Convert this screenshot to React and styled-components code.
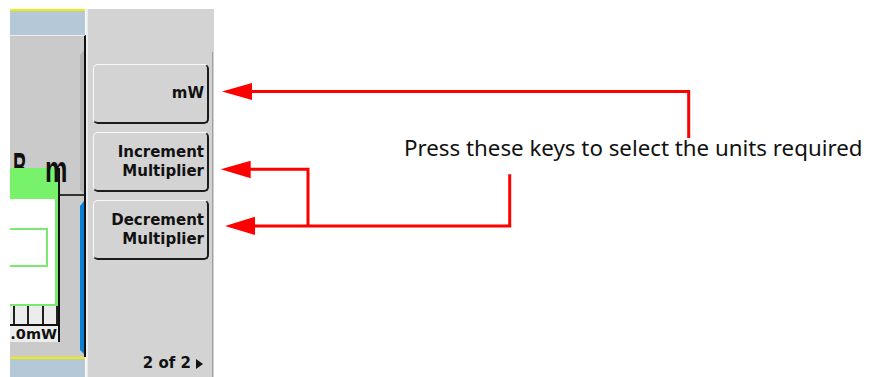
import React from 'react';
import styled, { createGlobalStyle } from 'styled-components';

const GlobalStyle = createGlobalStyle`
  html, body {
    margin: 0;
    padding: 0;
    background: #ffffff;
  }
  body {
    width: 870px;
    height: 377px;
    overflow: hidden;
  }
`;

const Page = styled.div`
  display: flex;
  height: 377px;
  padding-left: 10px;
  box-sizing: border-box;
`;

const Screen = styled.div`
  display: flex;
  margin-top: 9px;
  height: 368px;
`;

/* left part: the measurement display, cut off by the screenshot */
const Display = styled.div`
  display: flex;
  flex-direction: column;
  width: 76px;
`;

const StatusBar = styled.div`
  flex-shrink: 0;
  height: ${({ $h }) => $h}px;
  border-top: 2px solid #eeee00;
  background: #b5c8d8;
  margin-right: 1px;
`;

const Body = styled.div`
  display: flex;
  flex-shrink: 0;
  height: 321px;
  background: #cacaca;
  border-top: 1px solid #ececec;
  border-right: 2px solid #111111;
`;

const LeftCol = styled.div`
  display: flex;
  flex-direction: column;
  width: 50px;
`;

const Reading = styled.div`
  display: flex;
  align-items: flex-end;
  height: 132px;
  padding-left: 3px;
  box-sizing: border-box;
`;

const ReadingLine = styled.div`
  display: flex;
  align-items: baseline;
  margin-bottom: -21px;
  font-family: "Liberation Sans", Arial, sans-serif;
  font-weight: bold;
  color: #101010;
  line-height: 1;
`;

const Glyph = styled.span`
  display: inline-block;
  font-size: ${({ $size }) => $size}px;
  width: ${({ $w }) => $w}px;
  margin-right: ${({ $gap }) => $gap || 0}px;
  transform: scaleX(${({ $sx }) => $sx});
  transform-origin: left center;
  position: relative;
  z-index: ${({ $top }) => ($top ? 2 : 0)};
`;

const Window = styled.div`
  position: relative;
  z-index: 1;
  display: flex;
  flex-direction: column;
  border-right: 2px solid #111111;
`;

const WinHeader = styled.div`
  height: 31px;
  background: #78f26a;
`;

const WinBody = styled.div`
  height: 107px;
  background: #ffffff;
  border-right: 3px solid #7be96f;
  border-bottom: 2px solid #7be96f;
  padding-top: 29px;
  box-sizing: border-box;
`;

const Field = styled.div`
  width: 38px;
  height: 39px;
  box-sizing: border-box;
  border: 2px solid #7be96f;
  border-left: none;
`;

const Scale = styled.div`
  display: flex;
  justify-content: space-between;
  height: 18px;
  padding: 0 0 0 3px;
  background: #ececec;
  border-bottom: 2px solid #111111;
`;

const Tick = styled.div`
  width: 2px;
  background: #202020;
`;

const ScaleLabel = styled.div`
  height: 16px;
  padding-right: 1px;
  text-align: right;
  white-space: nowrap;
  font-family: "DejaVu Sans", sans-serif;
  font-weight: bold;
  font-size: 14.5px;
  line-height: 16px;
  color: #111111;
  background: #ececec;
`;

const SideCol = styled.div`
  display: flex;
  flex-direction: column;
  width: 24px;
`;

const SideUpper = styled.div`
  display: flex;
  justify-content: flex-end;
  height: 158px;
  padding-top: 14px;
  box-sizing: border-box;
`;

const Bevel = styled.div`
  width: 4px;
  background: ${({ $color }) => $color};
  clip-path: polygon(100% 0, 0 5px, 0 calc(100% - 4px), 100% 100%);
`;

const Rule = styled.div`
  height: 2px;
  background: #333333;
`;

const SideLower = styled.div`
  display: flex;
  justify-content: flex-end;
  height: 158px;
  padding-top: 5px;
  box-sizing: border-box;
`;

/* right part: the softkey panel */
const Panel = styled.div`
  display: flex;
  flex-direction: column;
  width: 128px;
  height: 368px;
  box-sizing: border-box;
  background: #d3d3d3;
  border-left: 2px solid #ededed;
`;

const KeyColumn = styled.div`
  display: flex;
  flex-direction: column;
  gap: 8px;
  flex: 1;
  margin: 43px 1px 0 0;
  padding: 12px 3px 0 5px;
  border-right: 1px solid #a0a0a0;
`;

const Key = styled.div`
  display: flex;
  flex-direction: column;
  justify-content: center;
  align-items: flex-end;
  height: 60px;
  box-sizing: border-box;
  padding-right: 3px;
  border-style: solid;
  border-width: 1px 2px 2px 1px;
  border-color: #f8f8f8 #1c1c1c #1c1c1c #f8f8f8;
  border-radius: 5px;
  font-family: "DejaVu Sans", sans-serif;
  font-weight: bold;
  font-size: 15px;
  line-height: 19px;
  color: #111111;
`;

const PageIndicator = styled.div`
  display: flex;
  align-items: center;
  justify-content: flex-end;
  gap: 5px;
  margin-top: auto;
  padding: 0 6px 4px 0;
  font-family: "DejaVu Sans", sans-serif;
  font-weight: bold;
  font-size: 15px;
  line-height: 19px;
  color: #111111;
`;

const Arrow = styled.span`
  width: 0;
  height: 0;
  border-left: 7px solid #111111;
  border-top: 5px solid transparent;
  border-bottom: 5px solid transparent;
`;

/* annotation canvas */
const Callouts = styled.div`
  position: relative;
  flex: 1;
  height: 377px;
`;

const CalloutLines = styled.svg`
  position: absolute;
  left: 0;
  top: 0;
`;

const CalloutText = styled.div`
  position: absolute;
  left: 190px;
  top: 135px;
  font-family: "Noto Sans", "Open Sans", sans-serif;
  font-size: 22.3px;
  line-height: 26px;
  color: #111111;
  white-space: nowrap;
`;

const keys = [
  ['mW'],
  ['Increment', 'Multiplier'],
  ['Decrement', 'Multiplier'],
];

const arrows = [
  { head: '8,91.5 38,83 38,100', path: 'M36 91.5 H474.7 V138' },
  { head: '6.7,169.3 36.7,160.7 36.7,178.3', path: 'M35 169.3 H94 V226' },
  { head: '11,226 41,216.7 41,235', path: 'M39 226 H295.7 V174.3' },
];

export default function App() {
  return (
    <>
      <GlobalStyle />
      <Page>
        <Screen>
          <Display>
            <StatusBar $h={24} />
            <Body>
              <LeftCol>
                <Reading>
                  <ReadingLine>
                    <Glyph $size={42} $w={30} $sx={0.45} $gap={2}>B</Glyph>
                    <Glyph $size={36} $w={32} $sx={0.7} $top>m</Glyph>
                  </ReadingLine>
                </Reading>
                <Window>
                  <WinHeader />
                  <WinBody>
                    <Field />
                  </WinBody>
                  <Scale>
                    <Tick />
                    <Tick />
                    <Tick />
                    <Tick />
                  </Scale>
                  <ScaleLabel>.0mW</ScaleLabel>
                </Window>
              </LeftCol>
              <SideCol>
                <SideUpper>
                  <Bevel $color="#b3b3b3" />
                </SideUpper>
                <Rule />
                <SideLower>
                  <Bevel $color="#0a7fd6" />
                </SideLower>
              </SideCol>
            </Body>
            <StatusBar $h={22} />
          </Display>
          <Panel>
            <KeyColumn>
              {keys.map((lines, i) => (
                <Key key={i}>
                  {lines.map((l) => (
                    <span key={l}>{l}</span>
                  ))}
                </Key>
              ))}
              <PageIndicator>
                2 of 2 <Arrow />
              </PageIndicator>
            </KeyColumn>
          </Panel>
        </Screen>
        <Callouts>
          <CalloutLines width="656" height="377" viewBox="0 0 656 377">
            {arrows.map((a, i) => (
              <g key={i} fill="#ff0000" stroke="none">
                <polygon points={a.head} />
                <path d={a.path} fill="none" stroke="#ff0000" strokeWidth="3" />
              </g>
            ))}
          </CalloutLines>
          <CalloutText>Press these keys to select the units required</CalloutText>
        </Callouts>
      </Page>
    </>
  );
}
